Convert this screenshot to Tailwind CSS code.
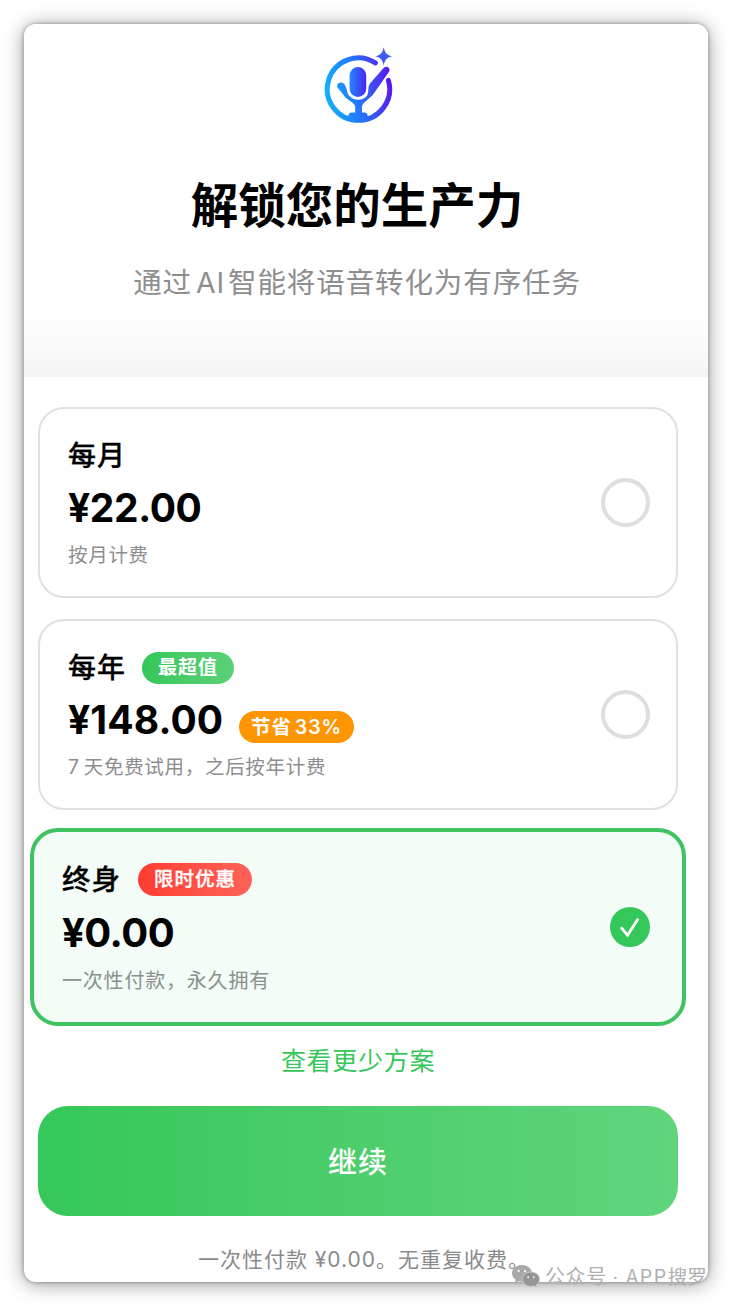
<!DOCTYPE html>
<html lang="zh-CN">
<head>
    <meta charset="UTF-8">
    <meta name="viewport" content="width=device-width, initial-scale=1.0">
    <title>解锁您的生产力</title>
    <script src="https://cdn.jsdelivr.net/npm/@tailwindcss/browser@4"></script>
</head>
<body class="bg-white p-6 h-[1306px] overflow-hidden font-['Inter','Noto_Sans_CJK_SC',sans-serif] text-black whitespace-nowrap">
    <div class="relative w-[684px] h-[1258px] rounded-xl bg-white shadow-[0_0_4px_rgba(0,0,0,0.35),0_2px_20px_rgba(0,0,0,0.4)]">
        <!-- Header -->
        <header class="h-[353px] pr-[18px] rounded-t-xl flex flex-col items-center bg-linear-to-b from-white from-80% via-[#fafafa] via-92% to-[#f4f4f4]">
            <svg class="mt-[21px] ml-px w-[72px] h-[80px] shrink-0" viewBox="12 10 72 80" fill="none">
                <defs>
                    <linearGradient id="logo" gradientUnits="userSpaceOnUse" x1="14" y1="60" x2="82" y2="48">
                        <stop offset="0" stop-color="#0fb5fb"/>
                        <stop offset="0.5" stop-color="#2672fb"/>
                        <stop offset="1" stop-color="#5b16ee"/>
                    </linearGradient>
                    <linearGradient id="mic" gradientUnits="userSpaceOnUse" x1="39" y1="47" x2="57" y2="47">
                        <stop offset="0" stop-color="#2389fb"/>
                        <stop offset="1" stop-color="#4a22f2"/>
                    </linearGradient>
                </defs>
                <path d="M65.4 27.9A31.2 31.2 0 1 0 78.4 45.4" stroke="url(#logo)" stroke-width="5" stroke-linecap="round"/>
                <rect x="39.6" y="32" width="16.6" height="30" rx="8.3" fill="url(#mic)"/>
                <path d="M27.4 52.4C26 48.6 30.3 46 33.4 48.2C36.8 50.8 36.4 57 39.2 60.8C43.6 66.2 52.8 66.2 57 60.8C59.4 57.2 57.2 52.6 60 48.6L73.8 32.8C76.8 29.8 81 33.2 79 36.8L64 58.2C59.6 64.4 52 67.4 52 71.8V77.4H54.6C57.6 77.6 57.8 80 57.8 85H38.2C38.2 80 38.6 77.6 41.4 77.4H45.2V71.8C44.8 67.8 39.4 66.2 35.6 62.4C32.4 59 31.2 56.4 27.4 52.4Z" fill="url(#logo)"/>
                <path d="M73.7 12.2C74.9 18 77 20.2 82.4 21.3C77 22.4 74.9 24.6 73.7 30.4C72.5 24.6 70.4 22.4 65 21.3C70.4 20.2 72.5 18 73.7 12.2Z" fill="#3d5cf5"/>
            </svg>
            <h1 class="mt-[46px] h-[70px] leading-[70px] text-[47.5px] font-bold">解锁您的生产力</h1>
            <p class="mt-[21px] h-[42px] leading-[42px] text-[28.5px] tracking-[0.9px] text-[#8e8e8f]">通过<span class="ml-[4px] mr-[3px]">AI</span>智能将语音转化为有序任务</p>
        </header>

        <!-- Plans -->
        <main class="pt-[30px] pl-[14px] w-[654px] flex flex-col">
            <section class="h-[191px] border-2 border-[#e0e0e1] rounded-[26px] pl-[28px] pr-[26px] flex items-center justify-between">
                <div>
                    <h2 class="h-[42px] leading-[42px] text-[28px] tracking-[1px] font-medium [-webkit-text-stroke:0.3px]">每月</h2>
                    <p class="mt-[5px] h-[52px] leading-[52px] text-[39px] tracking-[-0.4px] font-bold">¥22.00</p>
                    <p class="mt-[6px] h-[30px] leading-[30px] text-[19.5px] tracking-[0.7px] text-[#8e8e8f]">按月计费</p>
                </div>
                <span class="size-[49px] rounded-full border-4 border-[#dededf]"></span>
            </section>

            <section class="mt-[21px] h-[191px] border-2 border-[#e0e0e1] rounded-[26px] pl-[28px] pr-[26px] flex items-center justify-between">
                <div>
                    <div class="h-[42px] flex items-center gap-[16px]">
                        <h2 class="leading-[42px] text-[28px] tracking-[1px] font-medium [-webkit-text-stroke:0.3px]">每年</h2>
                        <span class="w-[92px] h-[32px] leading-[32px] rounded-full text-center text-[19px] tracking-[1px] font-bold text-white bg-linear-to-r from-[#34c759] to-[#5bd178]">最超值</span>
                    </div>
                    <div class="mt-[5px] h-[52px] flex items-center">
                        <p class="w-[171px] leading-[52px] text-[39px] tracking-[0.1px] font-bold">¥148.00</p>
                        <span class="mt-[14px] w-[115px] h-[32px] leading-[32px] rounded-full text-center text-[19.5px] tracking-[0.9px] font-semibold text-white bg-[#ff9500]">节省<span class="ml-[3px]">33%</span></span>
                    </div>
                    <p class="mt-[6px] h-[30px] leading-[30px] text-[19.5px] tracking-[0.7px] text-[#8e8e8f]">7<span class="ml-[4px]">天免费试用，之后按年计费</span></p>
                </div>
                <span class="size-[49px] rounded-full border-4 border-[#dededf]"></span>
            </section>

            <section class="mt-[18px] -ml-[8px] w-[656px] h-[198px] border-4 border-[#3ec360] rounded-[28px] bg-[#f3fcf6] pl-[28px] pr-[32px] flex items-center justify-between">
                <div>
                    <div class="h-[42px] flex items-center gap-[17px]">
                        <h2 class="leading-[42px] text-[28.5px] tracking-[1px] font-medium [-webkit-text-stroke:0.3px]">终身</h2>
                        <span class="w-[114px] h-[33px] leading-[33px] rounded-full text-center text-[19.5px] tracking-[1px] font-medium [-webkit-text-stroke:0.3px] text-white bg-linear-to-r from-[#ff3b30] to-[#ff6259]">限时优惠</span>
                    </div>
                    <p class="mt-[5px] h-[53px] leading-[53px] text-[40px] tracking-[-0.5px] font-bold">¥0.00</p>
                    <p class="mt-[7px] h-[30px] leading-[30px] text-[20px] tracking-[0.8px] text-[#8a918d]">一次性付款，永久拥有</p>
                </div>
                <svg class="size-[40px]" viewBox="0 0 40 40" fill="none">
                    <circle cx="20" cy="20" r="20" fill="#34c759"/>
                    <path d="M11.7 21.2L17.6 28.3L27.6 12.6" stroke="#fff" stroke-width="2.8" stroke-linecap="round" stroke-linejoin="round"/>
                </svg>
            </section>

            <a class="mt-[15px] h-[40px] leading-[40px] text-center text-[25px] tracking-[0.7px] text-[#34c759]">查看更少方案</a>
            <button class="mt-[25px] h-[110px] pt-[3px] rounded-[30px] text-[29px] tracking-[1px] font-medium text-white bg-linear-to-r from-[#34c759] to-[#60d57c]">继续</button>
            <p class="mt-[28px] h-[32px] leading-[32px] pl-[12px] text-center text-[21px] tracking-[1px] text-[#8a8a8b]">一次性付款 ¥0.00。无重复收费。</p>
        </main>

        <!-- Watermark -->
        <div class="absolute left-[488px] top-[1237px] w-[200px] h-[30px] flex items-center text-[#b0b0b0]">
            <svg class="w-[28px] h-[24px] shrink-0" viewBox="0 0 28 24">
                <path d="M10 1C4.5 1 0 4.6 0 9.3C0 12 1.5 14.3 3.7 15.8L3 19L6.6 17.2C7.7 17.5 8.8 17.7 10 17.7C15.5 17.7 20 14 20 9.3C20 4.6 15.5 1 10 1Z" fill="#a9a9a9"/>
                <path d="M19 8C14 8 10.3 11.2 10.3 15.2C10.3 19.2 14 22.4 19 22.4C20 22.4 21 22.2 22 21.9L25 23.6L24.3 20.7C26.3 19.4 27.6 17.4 27.6 15.2C27.6 11.2 24 8 19 8Z" fill="#969696" stroke="#d0d0d0" stroke-width="0.8"/>
                <g fill="#f0f0f0">
                    <circle cx="6.6" cy="7" r="1.2"/>
                    <circle cx="13" cy="7" r="1.2"/>
                    <circle cx="16.2" cy="13.2" r="1"/>
                    <circle cx="21.8" cy="13.2" r="1"/>
                </g>
            </svg>
            <p class="ml-[5px] flex leading-[30px] text-[20px] font-['Noto_Sans_CJK_SC',sans-serif]">
                <span class="w-[67px] tracking-[0.6px]">公众号</span>
                <span class="w-[14px] font-['Liberation_Sans',sans-serif]">·</span>
                <span class="tracking-[1.4px]">APP</span>
                <span class="text-[19.5px]">搜罗</span>
            </p>
        </div>
    </div>
</body>
</html>
